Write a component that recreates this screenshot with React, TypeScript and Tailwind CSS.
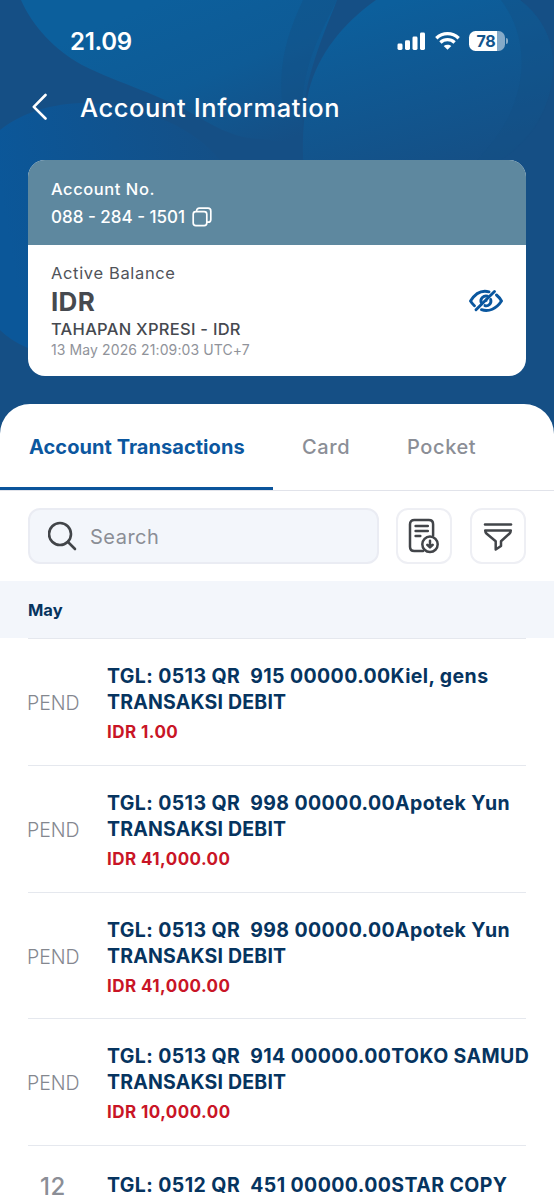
import type { ReactNode } from "react";

interface Transaction {
  date: string;
  title: string;
  kind: string;
  amount: string;
}

const transactions: Transaction[] = [
  {
    date: "PEND",
    title: "TGL: 0513 QR  915 00000.00Kiel, gens",
    kind: "TRANSAKSI DEBIT",
    amount: "IDR 1.00",
  },
  {
    date: "PEND",
    title: "TGL: 0513 QR  998 00000.00Apotek Yun",
    kind: "TRANSAKSI DEBIT",
    amount: "IDR 41,000.00",
  },
  {
    date: "PEND",
    title: "TGL: 0513 QR  998 00000.00Apotek Yun",
    kind: "TRANSAKSI DEBIT",
    amount: "IDR 41,000.00",
  },
  {
    date: "PEND",
    title: "TGL: 0513 QR  914 00000.00TOKO SAMUD",
    kind: "TRANSAKSI DEBIT",
    amount: "IDR 10,000.00",
  },
];

function HeaderBackdrop() {
  return (
    <svg
      className="absolute inset-0 h-full w-full"
      viewBox="0 0 554 450"
      preserveAspectRatio="none"
      aria-hidden="true"
    >
      <defs>
        <linearGradient id="petalA" gradientUnits="userSpaceOnUse" x1="160" y1="0" x2="230" y2="165">
          <stop offset="0" stopColor="#0c5f9c" />
          <stop offset="0.5" stopColor="#0e5b96" />
          <stop offset="1" stopColor="#154f85" />
        </linearGradient>
        <linearGradient id="petalB" gradientUnits="userSpaceOnUse" x1="400" y1="0" x2="450" y2="175">
          <stop offset="0" stopColor="#0c5f9c" />
          <stop offset="1" stopColor="#154f85" />
        </linearGradient>
        <linearGradient id="petalC" gradientUnits="userSpaceOnUse" x1="0" y1="190" x2="240" y2="150">
          <stop offset="0" stopColor="#0b5799" />
          <stop offset="1" stopColor="#154f85" />
        </linearGradient>
      </defs>
      <rect width="554" height="450" fill="#154f85" />
      <path
        d="M21 0C33 27 55 50 82 65C120 84 160 94 200 118C222 131 240 139 262 139C280 142 295 145 303 145C299 92 318 48 337 0Z"
        fill="url(#petalA)"
      />
      <path d="M303 0C286 36 279 65 282 100L301 118C302 67 318 38 337 0Z" fill="#154f85" opacity="0.4" />
      <path
        d="M376 0C342 24 318 55 309 90C302 120 302 150 304 180H460C515 160 553 120 553 65C553 35 538 14 520 0Z"
        fill="url(#petalB)"
      />
      <path
        d="M501 0C525 32 529 75 508 118C499 137 480 158 458 180C520 160 553 120 553 65C553 35 538 14 520 0Z"
        fill="#154f85"
        opacity="0.4"
      />
      <path
        d="M0 130C34 103 92 93 151 115C198 131 230 160 240 200L28 348C16 343 6 336 0 330Z"
        fill="url(#petalC)"
      />
    </svg>
  );
}

function StatusBar() {
  return (
    <div className="flex h-[82px] items-center justify-between pr-[46px] pl-[70px]">
      <span className="pt-px text-[24px] leading-7 font-semibold tracking-[-0.3px]">21.09</span>
      <div className="flex items-center">
        <svg width="29" height="20" viewBox="0 0 29 20" fill="currentColor">
          <rect x="0.5" y="12.5" width="5" height="6.5" rx="1.4" />
          <rect x="8" y="9.3" width="5" height="9.7" rx="1.4" />
          <rect x="15.5" y="5.5" width="5" height="13.5" rx="1.4" />
          <rect x="23" y="1.5" width="5" height="17.5" rx="1.4" />
        </svg>
        <svg className="ml-[9px]" width="25" height="20" viewBox="0 0 25 20" fill="none" stroke="currentColor" strokeWidth="3.3">
          <path d="M1.3 7.2C7.7 1.1 17.3 1.1 23.7 7.2" />
          <path d="M5.4 11.5C9.5 7.7 15.5 7.7 19.6 11.5" />
          <path d="M12.5 18.8L8.7 15C10.9 13.2 14.1 13.2 16.3 15Z" fill="currentColor" stroke="none" />
        </svg>
        <div className="ml-[9px] flex h-5 w-[36px] items-center justify-center rounded-[6.5px] bg-[linear-gradient(90deg,#fff_78%,#86aac8_78%)] pr-[2px] text-[16px] leading-5 font-bold tracking-[-0.3px] text-[#12558d]">
          78
        </div>
        <div className="ml-px h-[6px] w-[2px] rounded-r-full bg-[#86aac8]" />
      </div>
    </div>
  );
}

function CopyIcon() {
  return (
    <svg width="20" height="20" viewBox="0 0 20 20" fill="none" stroke="currentColor" strokeWidth="1.7">
      <rect x="1.2" y="4.6" width="13.6" height="14" rx="2.6" />
      <path d="M4.6 4.4V4C4.6 2.3 5.7 1.2 7.4 1.2H16C17.7 1.2 18.8 2.3 18.8 4V12.4C18.8 14.1 17.7 15.2 16 15.2H15" />
    </svg>
  );
}

function HiddenEyeIcon() {
  return (
    <svg
      width="36"
      height="24"
      viewBox="0 0 36 24"
      fill="none"
      stroke="#0a579f"
      strokeWidth="2.9"
      strokeLinecap="round"
      strokeLinejoin="round"
    >
      <path d="M21 2.8C14 0.9 7.2 4.5 2.5 12C3.7 13.9 5 15.4 6.4 16.7" />
      <path d="M28.5 6C30.5 7.6 32.1 9.6 33.5 12C28.5 19.7 20.6 23.3 13.5 20.7" />
      <path d="M19.5 7.2C15.5 6 11.9 10 13.2 13.4" />
      <path d="M22.7 10.5C23.8 14.7 20.2 17.7 17 16.6" />
      <path d="M26.5 2.5L8 20.7" />
      <path d="M18.5 9.8V12" strokeWidth="1.7" />
    </svg>
  );
}

function StatementIcon() {
  return (
    <svg
      width="32"
      height="36"
      viewBox="0 0 32 36"
      fill="none"
      stroke="#424549"
      strokeWidth="2.5"
      strokeLinecap="round"
      strokeLinejoin="round"
    >
      <path d="M15 33H6.3C3.6 33 2 31.4 2 28.7V6.2C2 3.5 3.6 2 6.3 2H20.8C23.5 2 25.1 3.5 25.1 6.2V17.6" />
      <path d="M7.6 8.1H19.8M7.6 13H19.8M7.6 17.9H12.3" />
      <circle cx="22" cy="26.3" r="7.7" />
      <path d="M22 22.8V29M19.3 26.9L22 29.4L24.7 26.9" />
    </svg>
  );
}

function FilterIcon() {
  return (
    <svg
      className="mt-px"
      width="30"
      height="30"
      viewBox="0 0 30 30"
      fill="none"
      stroke="#424549"
      strokeWidth="2.5"
      strokeLinecap="round"
      strokeLinejoin="round"
    >
      <path d="M2 2.6H28" />
      <path d="M2.2 8.5H27.8C27.8 10 27.3 10.8 26.3 11.8L18 19.2V24L12.7 27.5V19.2L3.7 11.8C2.7 10.8 2.2 10 2.2 8.5Z" />
    </svg>
  );
}

function IconButton({ label, children }: { label: string; children: ReactNode }) {
  return (
    <button
      aria-label={label}
      className="flex h-14 w-14 shrink-0 items-center justify-center rounded-xl border-2 border-[#eeeff4] bg-white"
    >
      {children}
    </button>
  );
}

function AccountCard() {
  return (
    <section className="mx-7 h-[216px] w-[498px] overflow-hidden rounded-[17px] bg-white">
      <div className="h-[85px] bg-[#5e889f] pt-[18px] pl-[23px] text-white">
        <p className="text-[16.5px] leading-[22px] font-medium tracking-[0.55px]">Account No.</p>
        <div className="mt-[6px] flex items-center gap-[7px]">
          <span className="text-[17px] leading-[22px] font-medium">088 - 284 - 1501</span>
          <CopyIcon />
        </div>
      </div>
      <div className="flex pt-[17px] pr-[22px] pl-[23px]">
        <div className="flex-1">
          <p className="text-[16.5px] leading-[22px] tracking-[0.65px] text-[#505359]">Active Balance</p>
          <p className="mt-[2px] text-[26px] leading-8 font-bold tracking-[0.3px] text-[#46494f]">IDR</p>
          <p className="text-[16.5px] leading-[22px] font-medium tracking-[0.27px] text-[#46494f]">TAHAPAN XPRESI - IDR</p>
          <p className="text-[14px] leading-5 tracking-[0.1px] text-[#90939a]">13 May 2026 21:09:03 UTC+7</p>
        </div>
        <button aria-label="Show balance" className="mt-[27px] self-start">
          <HiddenEyeIcon />
        </button>
      </div>
    </section>
  );
}

function Tabs() {
  return (
    <nav className="flex h-[87px] border-b border-[#e1e3ea] text-[20px] leading-[26px]">
      <button className="flex h-[86px] w-[273px] items-center border-b-[3px] border-[#0b549b] pt-[2px] pl-[29px] font-bold text-[#0b579f]">
        <span className="tracking-[0.05px]">Account Transactions</span>
      </button>
      <button className="ml-[29px] h-[85px] w-[105px] text-left font-medium tracking-[0.6px] text-[#8b8e96]">Card</button>
      <button className="h-[85px] font-medium tracking-[0.6px] text-[#8b8e96]">Pocket</button>
    </nav>
  );
}

function TransactionRow({ item }: { item: Transaction }) {
  return (
    <li className="mx-7 flex h-[126.8px] border-t-[1.5px] border-[#e5e8ee] whitespace-pre">
      <div className="-ml-px mt-[51px] w-20 shrink-0 text-[19.5px] leading-[26px] font-light tracking-[-0.05px] text-[#84878f]">
        {item.date}
      </div>
      <div className="pt-[24px] text-[#06345f]">
        <p className="text-[19.5px] leading-[26px] font-bold tracking-[0.4px]">{item.title}</p>
        <p className="text-[19.5px] leading-[26px] font-bold tracking-[0.2px]">{item.kind}</p>
        <p className="mt-[6px] text-[17px] leading-[22px] font-bold tracking-[0.45px] text-[#c91526]">{item.amount}</p>
      </div>
    </li>
  );
}

export default function App() {
  return (
    <main className="h-[1200px] w-[554px] overflow-hidden bg-white font-['Inter','Liberation_Sans',sans-serif] text-white">
      <header className="relative h-[404px] bg-[#154f85]">
        <div className="absolute inset-x-0 top-0 h-[450px]">
          <HeaderBackdrop />
        </div>
        <div className="relative">
          <StatusBar />
          <div className="flex h-[78px] items-start pt-[10px] pl-8">
            <svg
              width="16"
              height="28"
              viewBox="0 0 16 28"
              fill="none"
              stroke="currentColor"
              strokeWidth="2.6"
              strokeLinecap="round"
              strokeLinejoin="round"
            >
              <path d="M13.5 3L1.8 14.8L13.5 26.5" />
            </svg>
            <h1 className="ml-8 text-[25.5px] leading-8 font-medium tracking-[0.6px]">Account Information</h1>
          </div>
          <AccountCard />
        </div>
      </header>

      <div className="relative rounded-t-[30px] bg-white">
        <Tabs />
        <div className="flex items-center px-7 pt-[17px]">
          <div className="mr-[17px] flex h-14 w-[351px] items-center rounded-xl border-2 border-[#eaecf3] bg-[#f3f6fb] pl-[18px]">
            <svg width="30" height="30" viewBox="0 0 30 30" fill="none" stroke="#424549" strokeWidth="2.6" strokeLinecap="round">
              <circle cx="12" cy="13" r="11" />
              <path d="M20 21L27 28" />
            </svg>
            <span className="ml-[12px] pt-px text-[20px] leading-[26px] tracking-[0.5px] text-[#8b8e96]">Search</span>
          </div>
          <IconButton label="Download statement">
            <StatementIcon />
          </IconButton>
          <div className="w-[18px] shrink-0" />
          <IconButton label="Filter">
            <FilterIcon />
          </IconButton>
        </div>

        <h2 className="mt-[17px] flex h-[57px] items-center bg-[#f3f6fb] pt-px pl-7 text-[16.5px] font-bold text-[#06345f]">
          May
        </h2>
        <ul>
          {transactions.map((item, index) => (
            <TransactionRow key={index} item={item} />
          ))}
          <li className="mx-7 flex border-t-[1.5px] border-[#e5e8ee] whitespace-pre">
            <div className="mt-[29px] w-[79px] shrink-0 pl-[12px] text-[24px] leading-6 font-medium tracking-[0.5px] text-[#8b8e96]">
              12
            </div>
            <p className="mt-[26px] text-[19.5px] leading-[26px] font-bold tracking-[0.42px] text-[#06345f]">
              {"TGL: 0512 QR  451 00000.00STAR COPY"}
            </p>
          </li>
        </ul>
      </div>
    </main>
  );
}
